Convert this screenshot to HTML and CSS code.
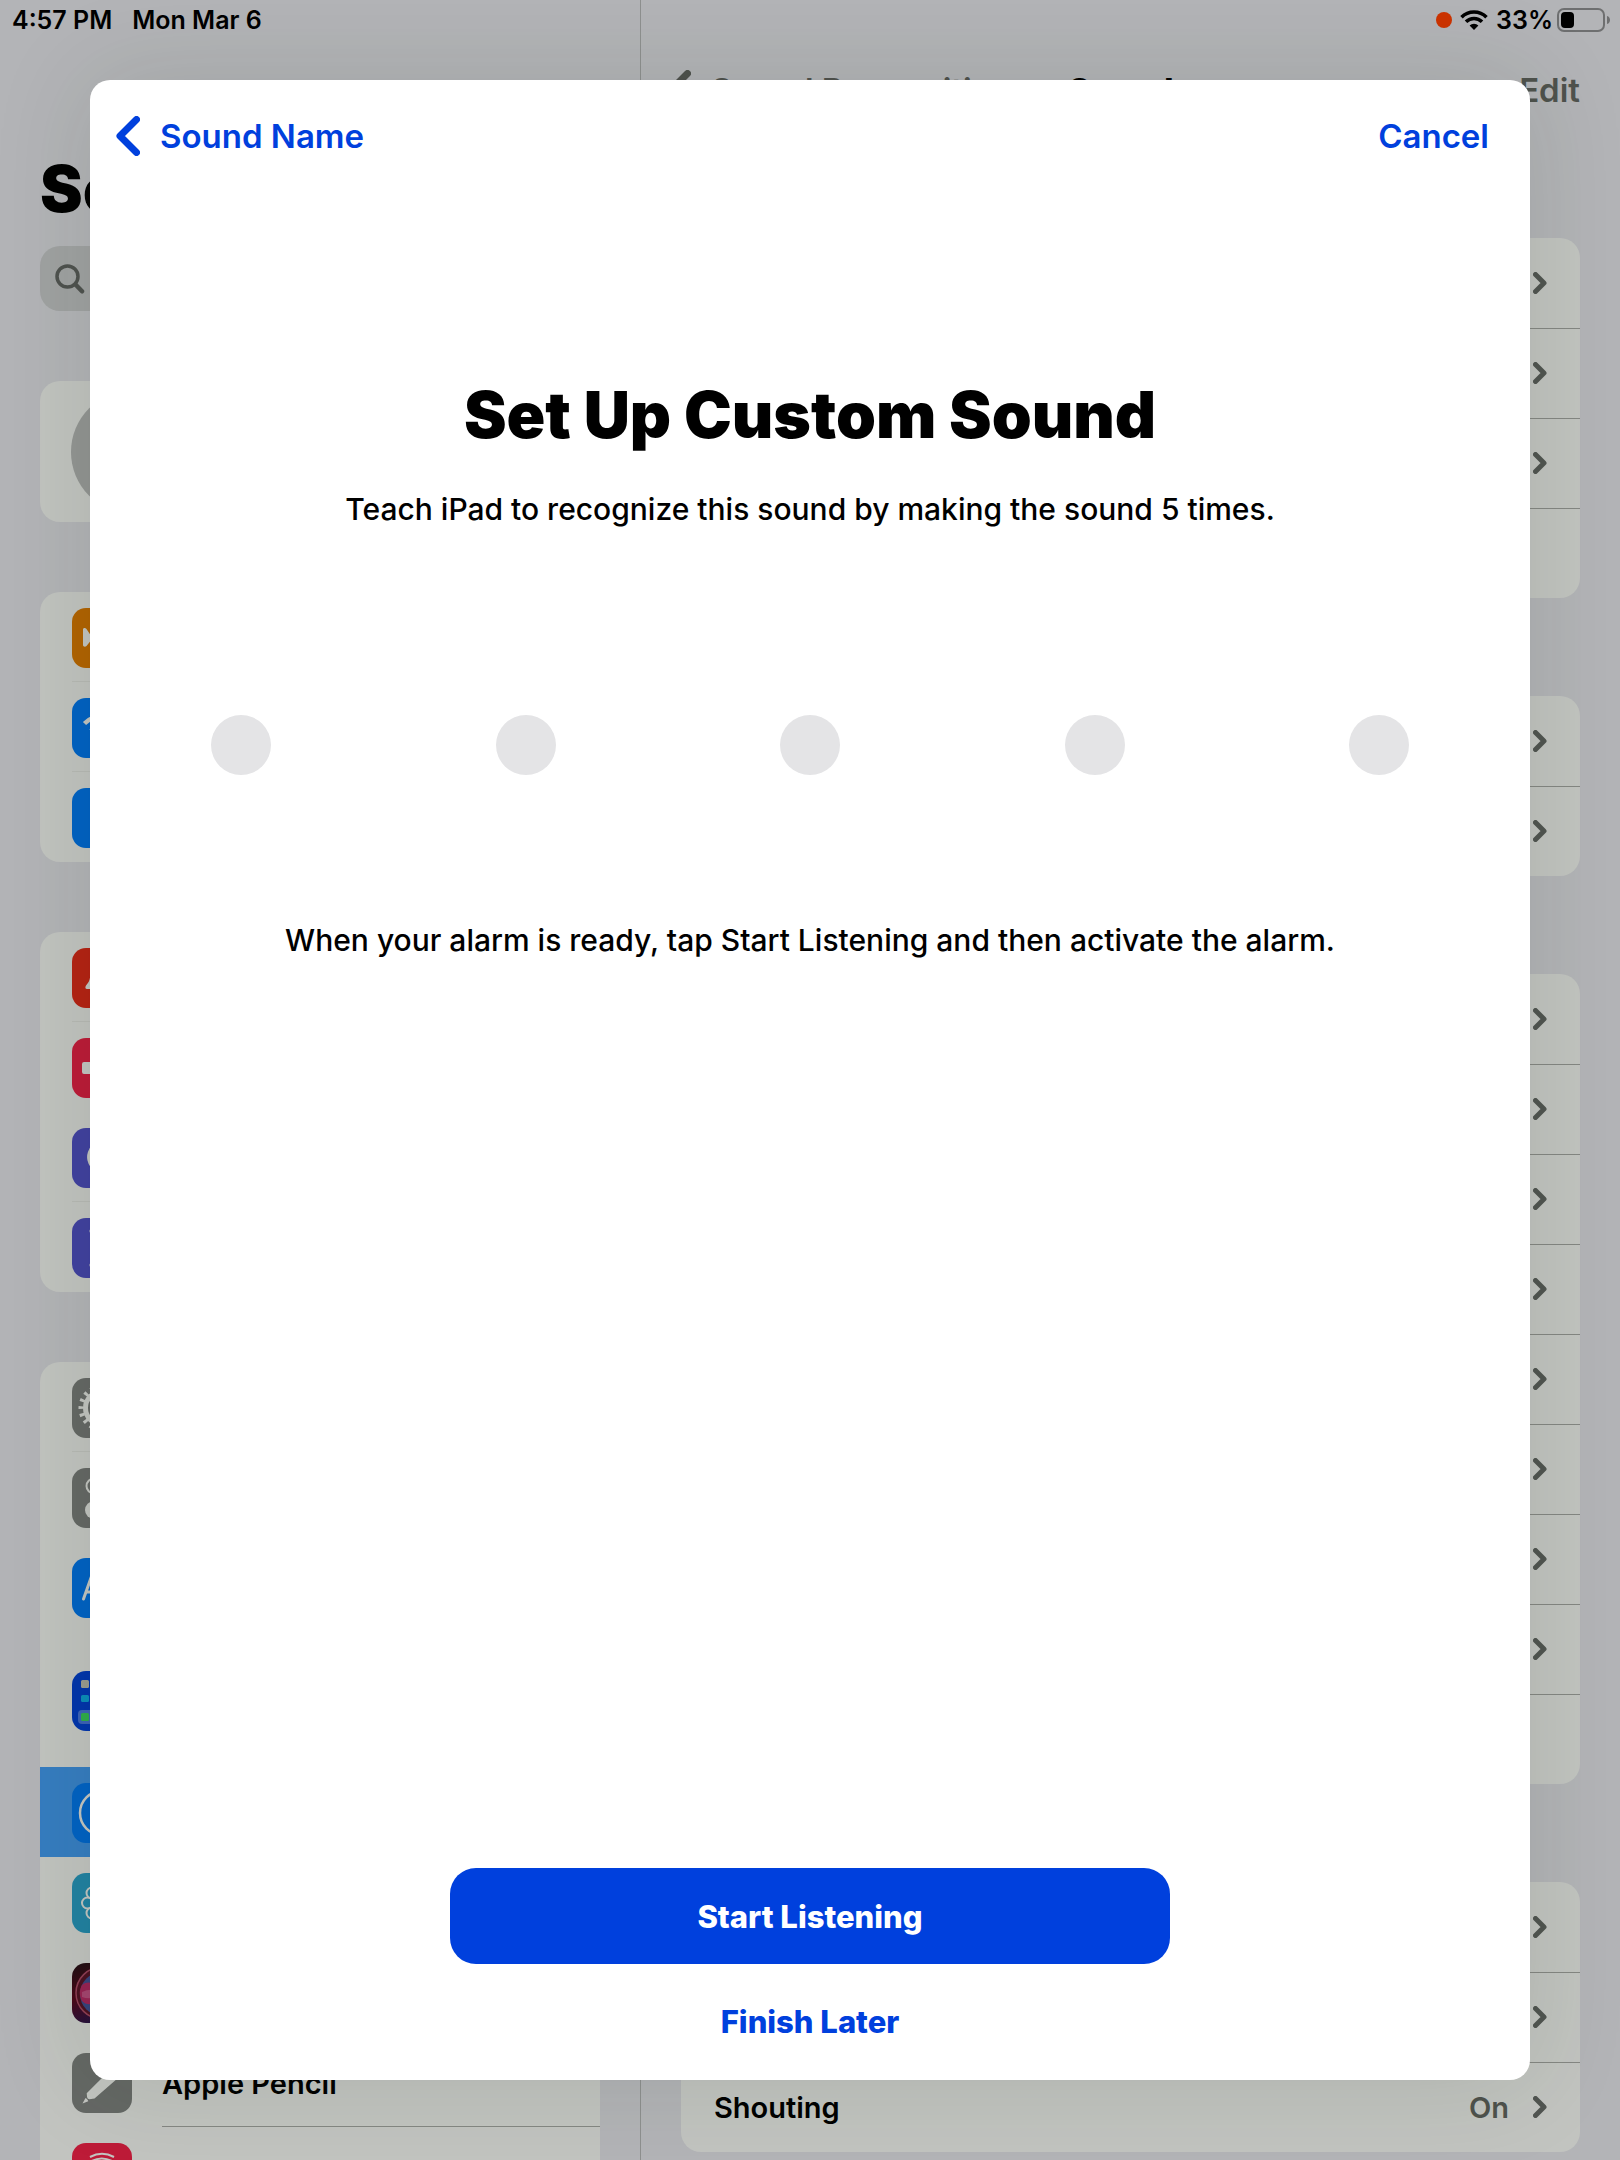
FILE: index.html
```html
<!DOCTYPE html>
<html lang="en">
<head>
<meta charset="utf-8">
<meta name="viewport" content="width=device-width, initial-scale=1">
<title>Set Up Custom Sound</title>
<link rel="stylesheet" href="styles.css">
</head>
<body>
<svg class="defs" aria-hidden="true">
  <symbol id="chevron" viewBox="0 0 14 22"><path d="M2.500 2.500 11 11 2.500 19.500" fill="none" stroke="currentColor" stroke-width="5" stroke-linecap="round" stroke-linejoin="round"/></symbol>
  <symbol id="back" viewBox="0 0 24 40"><path d="M20.500 3.500 4 20l16.500 16.500" fill="none" stroke="currentColor" stroke-width="7" stroke-linecap="round" stroke-linejoin="round"/></symbol>
</svg>

<header class="status">
  <div class="status-side">
    <span>4:57 PM</span>
    <span>Mon Mar 6</span>
  </div>
  <div class="status-side status-right">
    <span class="mic-dot"></span>
    <svg width="28" height="20" viewBox="0 0 28 20" aria-hidden="true">
      <g fill="none" stroke="#000" stroke-width="3.600">
        <path d="M1.500 7.200a17.800 17.800 0 0 1 25 0"/>
        <path d="M6 11.800a11.400 11.400 0 0 1 16 0"/>
      </g>
      <path d="M14 20 9.600 15.600a6.300 6.300 0 0 1 8.800 0z"/>
    </svg>
    <span class="percent">33%</span>
    <svg width="54" height="24" viewBox="0 0 54 24" aria-hidden="true">
      <rect x="1" y="1" width="46" height="22" rx="6" fill="none" stroke="#6e6f70" stroke-width="2"/>
      <rect x="4" y="4" width="13" height="16" rx="4"/>
      <path d="M50 8c4 1 4 7 0 8z" fill="#6e6f70"/>
    </svg>
  </div>
</header>

<div class="app">
  <aside class="sidebar">
    <div class="sidebar-top">
      <h2 class="sidebar-title">Settings</h2>
      <div class="search">
        <svg width="30" height="30" viewBox="0 0 30 30" fill="none" stroke="currentColor" aria-hidden="true"><circle cx="12.500" cy="12.500" r="10.500" stroke-width="3.500"/><path d="m20.500 20.500 6.500 6.800" stroke-width="4.500" stroke-linecap="round"/></svg>
        <input type="search" aria-label="Search settings">
      </div>
    </div>

    <div class="card profile"><span class="avatar"></span></div>

    <ul class="card">
      <li class="item line"><svg class="icon orange" viewBox="0 0 60 60"><path d="M11 21.500c0-2 2.500-2 3.500-.500l4 6H24L20 11h4l11 16h11c5 0 5 6 0 6H35L24 49h-4l4-16h-5.500l-4 5c-1 1-3.500 1-3.500-1z"/></svg></li>
      <li class="item line"><svg class="icon blue" viewBox="0 0 60 60"><g class="stroke" stroke-width="4.500"><path d="M12.500 25.500a25 25 0 0 1 35 0"/><path d="M19 33a15.500 15.500 0 0 1 22 0"/></g><path d="m30 45-6-6a8.500 8.500 0 0 1 12 0z"/></svg></li>
      <li class="item"><svg class="icon blue" viewBox="0 0 60 60"><path class="stroke" stroke-width="3" d="m21 20 18 20-9 9V11l9 9-18 20"/></svg></li>
    </ul>

    <ul class="card">
      <li class="item line"><svg class="icon red" viewBox="0 0 60 60"><path d="M15 41c-2 0-2-2-1-3.500 3-3.500 4-5 4.500-13C19 17 24 12 30 12s11 5 11.500 12.500c.5 8 1.500 9.500 4.500 13 1 1.500 1 3.500-1 3.500zM25 44h10c-1 6-9 6-10 0z"/></svg></li>
      <li class="item"><svg class="icon pink" viewBox="0 0 60 60"><path d="M10 26q0-2 2-2h8l10-9v30l-10-9h-8q-2 0-2-2z"/></svg></li>
      <li class="item line"><svg class="icon indigo" viewBox="0 0 60 60"><path d="M28 13a16.500 16.500 0 1 0 19 22A17 17 0 0 1 28 13z"/></svg></li>
      <li class="item"><svg class="icon indigo" viewBox="0 0 60 60"><path d="M19 11h22c2 0 2 4 0 4 0 9-7 11-7 15s7 6 7 15c2 0 2 4 0 4H19c-2 0-2-4 0-4 0-9 7-11 7-15s-7-6-7-15c-2 0-2-4 0-4z"/></svg></li>
    </ul>

    <ul class="card">
      <li class="item line"><svg class="icon gray" viewBox="0 0 60 60"><circle class="stroke" cx="30" cy="30" r="21" stroke-width="5" stroke-dasharray="2.900 4.430" stroke-dashoffset="1.450"/><circle class="stroke" cx="30" cy="30" r="16.500" stroke-width="5"/></svg></li>
      <li class="item"><svg class="icon gray" viewBox="0 0 60 60"><rect class="stroke" x="14.500" y="10.500" width="31" height="15" rx="7.500" stroke-width="2"/><rect x="13" y="33" width="34" height="18" rx="9"/></svg></li>
      <li class="item"><svg class="icon blue" viewBox="0 0 60 60"><path class="stroke" stroke-width="3" stroke-linecap="round" d="m11.500 41 8.500-24 8.500 24M14 34h12M31 41l9-27 9 27M34 32h12"/></svg></li>
      <li class="item item-tall"><svg class="icon navy" viewBox="0 0 60 60"><rect x="6" y="39" width="48" height="14" rx="4" fill="#3c62b6"/><rect x="9" y="9" width="8" height="8" rx="1.500" fill="#9c9c90"/><rect x="9" y="24" width="8" height="7" rx="1.500" fill="#0a8dba"/><rect x="9" y="42" width="8" height="8" rx="1.500" fill="#2fad4a"/></svg></li>
      <li class="item selected"><svg class="icon blue" viewBox="0 0 60 60"><circle class="stroke" cx="30" cy="30" r="22" stroke-width="2.500"/><circle cx="30" cy="18" r="4"/><path d="M18 24l9 2v8l-4 12h3l4-10 4 10h3l-4-12v-8l9-2z"/></svg></li>
      <li class="item"><svg class="icon teal" viewBox="0 0 60 60"><g class="stroke" stroke-width="2"><circle cx="15.500" cy="30" r="5.500"/><circle cx="20" cy="20" r="5.500"/><circle cx="20" cy="40" r="5.500"/><circle cx="30" cy="15" r="5.500"/><circle cx="30" cy="45" r="5.500"/><circle cx="40" cy="20" r="5.500"/><circle cx="40" cy="40" r="5.500"/><circle cx="44.500" cy="30" r="5.500"/></g></svg></li>
      <li class="item"><svg class="icon siri" viewBox="0 0 60 60"><circle cx="30" cy="30" r="26" fill="#4b1020" stroke="#8f3e54" stroke-width="1.500"/><circle cx="30" cy="31" r="22" fill="#36437c"/><path d="M10 22c8-6 14 0 20 8-6 12-14 14-20 8-3-5-3-11 0-16z" fill="#982253"/><path d="M10 29q10-5 20 1-10 8-20 4z" fill="#a54470"/></svg></li>
      <li class="item"><svg class="icon gray" viewBox="0 0 60 60"><path d="m10.500 50.500 3-5.500c1 .5 2.500 2 2.800 3.200zM15 43.500l-.3-3.300L38 17q4-4 8 0t0 8L22.500 45.500l-5 .8c-1.500 0-2.500-1.500-2.500-2.800z"/></svg><span class="item-label">Apple Pencil</span></li>
      <li class="item"><svg class="icon pink" viewBox="0 0 60 60"><g class="stroke" stroke-width="2"><path d="M18 14q12-6.500 24 0M13.500 22q16-13 33 0M18 28q12-14 24 0"/></g></svg></li>
    </ul>
  </aside>

  <main class="detail">
    <nav class="detail-nav">
      <a class="nav-back" href="#"><svg width="24" height="40"><use href="#back"/></svg>Sound Recognition</a>
      <h2 class="nav-title">Sounds</h2>
      <button class="nav-edit" type="button">Edit</button>
    </nav>
    <div class="groups">
      <ul class="card">
        <li class="row"><svg class="chev"><use href="#chevron"/></svg></li>
        <li class="row"><svg class="chev"><use href="#chevron"/></svg></li>
        <li class="row"><svg class="chev"><use href="#chevron"/></svg></li>
        <li class="row"></li>
      </ul>
      <ul class="card">
        <li class="row"><svg class="chev"><use href="#chevron"/></svg></li>
        <li class="row"><svg class="chev"><use href="#chevron"/></svg></li>
      </ul>
      <ul class="card">
        <li class="row"><svg class="chev"><use href="#chevron"/></svg></li>
        <li class="row"><svg class="chev"><use href="#chevron"/></svg></li>
        <li class="row"><svg class="chev"><use href="#chevron"/></svg></li>
        <li class="row"><svg class="chev"><use href="#chevron"/></svg></li>
        <li class="row"><svg class="chev"><use href="#chevron"/></svg></li>
        <li class="row"><svg class="chev"><use href="#chevron"/></svg></li>
        <li class="row"><svg class="chev"><use href="#chevron"/></svg></li>
        <li class="row"><svg class="chev"><use href="#chevron"/></svg></li>
        <li class="row"></li>
      </ul>
      <ul class="card">
        <li class="row"><svg class="chev"><use href="#chevron"/></svg></li>
        <li class="row"><svg class="chev"><use href="#chevron"/></svg></li>
        <li class="row"><span class="row-label">Shouting</span><span class="row-value">On</span><svg class="chev"><use href="#chevron"/></svg></li>
      </ul>
    </div>
  </main>
</div>

<section class="sheet" role="dialog" aria-labelledby="sheet-title">
  <header class="sheet-nav">
    <button class="sheet-link" type="button"><svg width="24" height="40"><use href="#back"/></svg>Sound Name</button>
    <button class="sheet-link" type="button">Cancel</button>
  </header>
  <h1 class="sheet-title" id="sheet-title">Set Up Custom Sound</h1>
  <p class="sheet-text">Teach iPad to recognize this sound by making the sound 5 times.</p>
  <div class="dots"><span></span><span></span><span></span><span></span><span></span></div>
  <p class="sheet-text">When your alarm is ready, tap Start Listening and then activate the alarm.</p>
  <footer class="sheet-actions">
    <button class="primary" type="button">Start Listening</button>
    <button class="secondary" type="button">Finish Later</button>
  </footer>
</section>
</body>
</html>
```

FILE: styles.css
```css
* {
  box-sizing: border-box;
}

body,
h1,
h2,
p,
ul {
  margin: 0;
  padding: 0;
}

body {
  position: relative;
  height: 100vh;
  overflow: hidden;
  background: #b3b4b7;
  color: #000;
  font-family: Inter, "Liberation Sans", sans-serif;
  font-size: 29px;
  font-weight: 600;
}

ul {
  list-style: none;
}

button {
  padding: 0;
  border: 0;
  background: none;
  font: inherit;
}

svg {
  display: block;
  flex: none;
}

.defs {
  position: absolute;
  width: 0;
  height: 0;
}

/* Status bar */
.status {
  position: absolute;
  inset: 0 0 auto;
  display: flex;
  justify-content: space-between;
  height: 40px;
  padding: 0 9px 0 12px;
  font-size: 25px;
}

.status-side {
  display: flex;
  align-items: center;
  gap: 20px;
}

.status-right {
  gap: 8px;
}

.mic-dot {
  width: 16px;
  height: 16px;
  border-radius: 50%;
  background: #cc3300;
}

.percent {
  margin-right: -4px;
}

/* Split view */
.app {
  display: flex;
  height: 100%;
}

.sidebar {
  display: flex;
  flex: none;
  flex-direction: column;
  gap: 70px;
  width: 641px;
  padding: 154px 40px 0;
  border-right: 1px solid #8e908f;
}

.sidebar > * {
  flex: none;
}

.sidebar-title {
  margin-bottom: 22px;
  font-size: 64px;
  font-weight: 900;
  line-height: 70px;
}

.search {
  display: flex;
  align-items: center;
  height: 65px;
  padding: 0 15px;
  border-radius: 20px;
  background: #a0a2a2;
  color: #4f524f;
}

.search input {
  flex: 1;
  min-width: 0;
  border: 0;
  background: none;
  font: inherit;
}

.card {
  overflow: hidden;
  border-radius: 20px;
  background: #c2c4c0;
}

.profile {
  display: flex;
  align-items: center;
  height: 141px;
  padding-left: 31px;
}

.avatar {
  width: 124px;
  height: 124px;
  border-radius: 50%;
  background: #939593;
}

.item {
  display: flex;
  align-items: center;
  gap: 30px;
  height: 90px;
  padding: 2px 0 0 32px;
}

.item-tall {
  height: 135px;
}

.line {
  background: linear-gradient(#b8bab5, #b8bab5) 32px 100% / 100% 1px no-repeat;
}

.selected {
  background: #367dc1;
}

.item-label {
  flex: 1;
  padding-top: 2px;
  border-bottom: 1px solid #858783;
  line-height: 85px;
}

.icon {
  width: 60px;
  height: 60px;
  border-radius: 14px;
  fill: #c3c5c1;
}

.stroke {
  fill: none;
  stroke: #c3c5c1;
}

.orange { background: #b26300; }
.blue { background: #0062c4; }
.red { background: #b52213; }
.pink { background: #bd1b38; }
.indigo { background: #4141a0; }
.gray { background: #656865; }
.navy { background: #0235ac; }
.teal { background: #2182a2; }
.siri { background: linear-gradient(160deg, #1c0d12, #4b0718 45%, #1c1244 90%); }

/* Detail pane */
.detail {
  flex: 1;
  min-width: 0;
  padding: 60px 40px 0;
}

.detail-nav {
  display: grid;
  grid-template-columns: 1fr auto 1fr;
  align-items: center;
  height: 60px;
  margin-bottom: 118px;
  color: #4f524d;
  font-size: 33px;
}

.nav-back {
  display: flex;
  align-items: center;
  gap: 20px;
  margin-left: -14px;
  color: inherit;
  text-decoration: none;
  white-space: nowrap;
}

.nav-title {
  color: #000;
  font-size: 33px;
  font-weight: 800;
}

.nav-edit {
  justify-self: end;
  color: inherit;
}

.groups {
  display: grid;
  gap: 98px;
}

.row {
  display: flex;
  align-items: center;
  justify-content: flex-end;
  height: 90px;
  padding: 0 33px;
}

.row + .row {
  box-shadow: inset 0 1px #858783;
}

.row-label {
  flex: 1;
}

.row-value {
  margin-right: 24px;
  color: #4f524d;
}

.chev {
  width: 14px;
  height: 22px;
  color: #515551;
}

/* Modal sheet */
.sheet {
  position: absolute;
  inset: 80px 90px;
  display: flex;
  flex-direction: column;
  padding: 26px 0 38px;
  border-radius: 20px;
  background: #fff;
  box-shadow: 0 0 100px rgba(20, 50, 20, 0.13);
  text-align: center;
}

.sheet-nav {
  display: flex;
  align-items: center;
  justify-content: space-between;
  height: 60px;
  padding: 0 41px 0 26px;
  color: #0040dd;
  font-size: 33px;
}

.sheet-link {
  display: flex;
  align-items: center;
  gap: 20px;
  color: inherit;
}

.sheet-title {
  margin: 209px 0 34px;
  font-size: 64px;
  font-weight: 900;
  line-height: 80px;
}

.sheet-text {
  font-size: 30px;
  font-weight: 500;
  line-height: 40px;
}

.dots {
  display: flex;
  justify-content: space-between;
  margin: 186px 121px 145px;
}

.dots span {
  width: 60px;
  height: 60px;
  border-radius: 50%;
  background: #e4e4e6;
}

.sheet-actions {
  display: flex;
  flex-direction: column;
  align-items: center;
  gap: 38px;
  margin-top: auto;
  font-size: 31px;
  font-weight: 800;
}

.primary {
  width: 50%;
  height: 96px;
  border-radius: 26px;
  background: #0040dd;
  color: #fff;
}

.secondary {
  color: #0040dd;
  line-height: 40px;
}
```
